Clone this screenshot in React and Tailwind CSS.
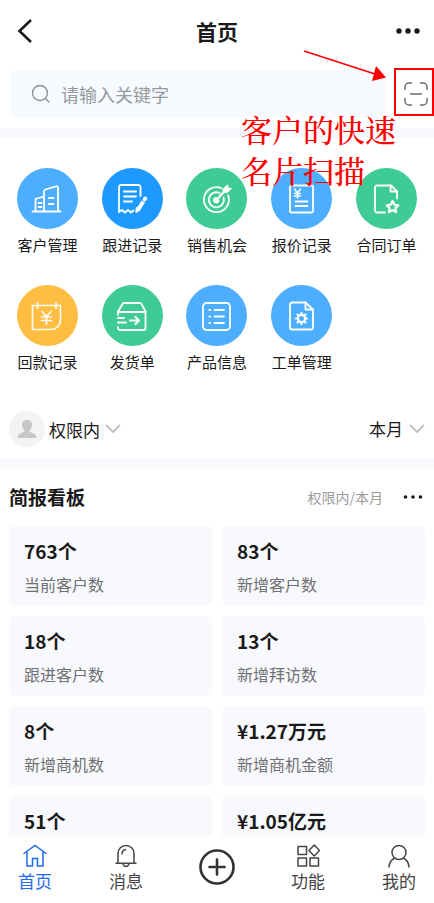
const apps = [
  { name: "客户管理", color: "bg-[#4dadfe]", icon: "building" },
  { name: "跟进记录", color: "bg-[#1e9aff]", icon: "note" },
  { name: "销售机会", color: "bg-[#3fcb95]", icon: "target" },
  { name: "报价记录", color: "bg-[#4dadfe]", icon: "quote" },
  { name: "合同订单", color: "bg-[#3fcb95]", icon: "contract" },
  { name: "回款记录", color: "bg-[#ffbd41]", icon: "payment" },
  { name: "发货单", color: "bg-[#3fcb95]", icon: "delivery" },
  { name: "产品信息", color: "bg-[#4dadfe]", icon: "product" },
  { name: "工单管理", color: "bg-[#4dadfe]", icon: "workorder" },
];

const stats = [
  { value: "763个", label: "当前客户数" },
  { value: "83个", label: "新增客户数" },
  { value: "18个", label: "跟进客户数" },
  { value: "13个", label: "新增拜访数" },
  { value: "8个", label: "新增商机数" },
  { value: "¥1.27万元", label: "新增商机金额" },
  { value: "51个" },
  { value: "¥1.05亿元" },
];

const appGlyphs = {
  building: (
    <>
      <path d="M1.500 28.500h28" />
      <path d="M4.500 28V17a1.500 1.500 0 0 1 1.200-1.500l7.300-1.800M13 28V8.500a2 2 0 0 1 1.500-2l10.500-3.200a1.500 1.500 0 0 1 2 1.500V28" />
      <path d="M7.500 20h3M7.500 24h3M18 15h4.500M18 21h4.500" />
    </>
  ),
  note: (
    <>
      <path d="M24.500 13V4a2 2 0 0 0-2-2H5a2 2 0 0 0-2 2v25l3-2 3 2.500 3-2.500 3 2.500 2.500-2" />
      <path d="M8 8.500h12M8 13.500h12M8 18.500h8" />
      <path d="M29.200 15.500l-.5.900" strokeWidth="4" />
      <path d="M27.300 18.500l-4.800 7.500" strokeWidth="4" strokeLinecap="butt" />
      <path d="M20.800 25l-.6 4 3.500-2.200z" fill="currentColor" />
    </>
  ),
  target: (
    <>
      <path d="M20.500 5.200A12.500 12.500 0 1 0 27.200 12.500" />
      <path d="M18.500 10A7.500 7.500 0 1 0 22.500 14.500" />
      <path d="M15 15.200a2 2 0 1 0 2.300 2.300" strokeWidth="2.400" />
      <path d="M15.500 17L25 6.500" strokeWidth="2.200" />
      <path d="M22 9V6L26.500 2l.8 3 3.200.6-4.500 4z" fill="currentColor" strokeWidth="1" />
    </>
  ),
  quote: (
    <>
      <rect x="4" y="2.500" width="23" height="27" rx="1.500" />
      <path d="M8.500 6l3 4 3-4M11.500 10v5M8.500 10.500h6M8.500 13h6" strokeWidth="1.500" />
      <path d="M9.500 18.500h12M9.500 23h12" />
    </>
  ),
  contract: (
    <>
      <path d="M14 29.500H6a2 2 0 0 1-2-2V4.500a2 2 0 0 1 2-2h14l6 6v7" />
      <path d="M19.500 2.500v6h6.500" />
      <path d="M21.500 18l1.800 3.700 4 .6-2.900 2.800.7 4-3.600-1.900-3.600 1.900.7-4-2.900-2.800 4-.6z" strokeWidth="2.200" />
    </>
  ),
  payment: (
    <>
      <path d="M6.500 5.500H1.500v24H20a9.500 9.500 0 0 0 9.500-9.500V5.500h-4.500" strokeWidth="1.600" />
      <path d="M6.500 2.500v6M25 2.500v6M7 5.500h17" strokeWidth="1.600" />
      <path d="M11 11.500l4.500 5 4.500-5M15.500 16.500v8M10.500 17h10M10.500 20.500h10" strokeWidth="1.600" />
    </>
  ),
  delivery: (
    <>
      <path d="M2 15v-3.500L6.500 4a2 2 0 0 1 1.700-1h15.600a2 2 0 0 1 1.700 1l4 7.500V28a2 2 0 0 1-2 2H4a2 2 0 0 1-2-2v-1" />
      <path d="M2 12h27.500" />
      <path d="M2 18h6M2 22.500h8" />
      <path d="M14 20.500h8.500M19.500 17l3.500 3.500-3.500 3.500" strokeWidth="2.200" />
    </>
  ),
  product: (
    <>
      <rect x="2" y="3" width="27" height="27" rx="3.500" />
      <path d="M8.500 10h.5M8.500 16.500h.5M8.500 23h.5" strokeWidth="2.200" />
      <path d="M13.500 10h9.500M13.500 16.500h9.500M13.500 23h9.500" />
    </>
  ),
  workorder: (
    <>
      <path d="M19.500 2.500H6a2 2 0 0 0-2 2v23a2 2 0 0 0 2 2h19a2 2 0 0 0 2-2V9.500z" />
      <path d="M19.500 2.500v7H27" />
      <circle cx="15.500" cy="18.500" r="3.600" strokeWidth="2.200" />
      <path d="M15.500 13v1M15.500 23v1M10 18.500h1M20 18.500h1M11.600 14.600l.8.800M18.600 21.600l.8.800M11.600 22.400l.8-.8M18.600 15.400l.8-.8" strokeWidth="2.200" />
    </>
  ),
};

function Icon({ children, className, box = "0 0 32 32", width = 2 }) {
  return (
    <svg
      aria-hidden="true"
      viewBox={box}
      className={className}
      fill="none"
      stroke="currentColor"
      strokeWidth={width}
      strokeLinecap="round"
      strokeLinejoin="round"
    >
      {children}
    </svg>
  );
}

function Dots({ className, radius = 2.7 }) {
  return (
    <svg aria-hidden="true" viewBox="0 0 24 6" className={className} fill="currentColor">
      <circle cx="3" cy="3" r={radius} />
      <circle cx="12" cy="3" r={radius} />
      <circle cx="21" cy="3" r={radius} />
    </svg>
  );
}

function Chevron() {
  return (
    <Icon box="0 0 16 10" className="h-[10px] w-4 text-[#c4c4c4]">
      <path d="M1.500 1.500L8 8l6.500-6.500" />
    </Icon>
  );
}

function Header() {
  return (
    <header className="flex h-[62px] shrink-0 items-center justify-between px-[14px]">
      <button aria-label="返回" className="flex w-12 pl-[2px]">
        <svg aria-hidden="true" viewBox="0 0 18 26" className="h-[26px] w-[18px]" fill="none" stroke="#1a1a1a" strokeWidth="2.600">
          <path d="M15 2L3.500 13 15 24" />
        </svg>
      </button>
      <h1 className="text-[21px] leading-7 font-bold">首页</h1>
      <button aria-label="更多" className="flex w-12 justify-end">
        <Dots className="h-6 w-6" />
      </button>
    </header>
  );
}

function SearchRow() {
  return (
    <div className="flex shrink-0 pt-2 pb-[10px] pl-[9px]">
      <label className="flex h-12 min-w-0 flex-1 items-center gap-[10px] rounded-lg bg-[#f7fbff] pl-[22px]">
        <Icon box="0 0 20 20" width={1.4} className="h-5 w-5 shrink-0 text-[#8c8f94]">
          <circle cx="9" cy="9" r="7.500" />
          <path d="M14.500 14.500l3.500 3.500" />
        </Icon>
        <input
          type="search"
          aria-label="搜索"
          placeholder="请输入关键字"
          className="min-w-0 flex-1 bg-transparent text-lg leading-6 outline-none placeholder:text-[#96999e]"
        />
      </label>
      <div className="relative ml-[9px]">
        <button aria-label="扫描名片" className="-mt-[2px] flex h-12 w-10 items-center justify-center border-2 border-[#f00] pt-1 pl-1">
          <Icon box="0 0 24 24" width={1.5} className="h-6 w-6 shrink-0 text-[#6b6b6b]">
            <path d="M1 7.500V5a4 4 0 0 1 4-4h2.500M16.500 1H19a4 4 0 0 1 4 4v2.500M23 16.500V19a4 4 0 0 1-4 4h-2.500M7.500 23H5a4 4 0 0 1-4-4v-2.500M6.500 12h11" />
          </Icon>
        </button>
        <svg aria-hidden="true" viewBox="0 0 84 34" className="pointer-events-none absolute -top-5 right-[47px] h-[34px] w-[84px]">
          <path d="M1 1L72 24" stroke="#f00" strokeWidth="1.700" />
          <path d="M83 27.500L69 31l4-15z" fill="#f00" />
        </svg>
        <p className="pointer-events-none absolute top-[38px] right-[35px] z-10 w-[158px] font-['Noto_Serif_CJK_SC','Noto_Sans_CJK_SC',serif] text-[31px] leading-[41px] font-medium whitespace-nowrap text-[#f00]">
          客户的快速
          <br />
          名片扫描
        </p>
      </div>
    </div>
  );
}

function AppGrid() {
  return (
    <nav aria-label="应用" className="grid shrink-0 grid-cols-5 gap-y-[30px] px-[5px] pt-[30px]">
      {apps.map((app) => (
        <a key={app.name} href="#" className="flex flex-col items-center gap-[6px]">
          <span className={`flex size-[61px] items-center justify-center rounded-full text-white ${app.color}`}>
            <Icon className="size-8" width={1.8}>{appGlyphs[app.icon]}</Icon>
          </span>
          <span className="text-[15px] leading-5">{app.name}</span>
        </a>
      ))}
    </nav>
  );
}

function Filters() {
  return (
    <div className="flex shrink-0 items-center justify-between px-[9px] pt-[39px] pb-[11px]">
      <label className="flex items-center gap-1">
        <span className="flex size-9 items-center justify-center rounded-full bg-[#f3f3f3]">
          <svg aria-hidden="true" viewBox="0 0 20 20" className="size-5" fill="#c6c6c6">
            <path d="M10 1c3 0 5 2 5 5 0 2.200-1 4.200-2.500 5.300v1.500L17.500 15c1.300.6 1.800 1.800 1.800 4H.7c0-2.200.5-3.400 1.800-4l5-2.200v-1.500C6 10.200 5 8.200 5 6c0-3 2-5 5-5z" />
          </svg>
        </span>
        <select aria-label="权限范围" className="w-[52px] appearance-none bg-transparent pt-[2px] text-[17px] leading-6">
          <option>权限内</option>
        </select>
        <Chevron />
      </label>
      <label className="flex items-center gap-1">
        <select aria-label="时间范围" className="w-9 appearance-none bg-transparent text-[17px] leading-6">
          <option>本月</option>
        </select>
        <Chevron />
      </label>
    </div>
  );
}

function Board() {
  return (
    <section className="px-[9px]">
      <div className="flex h-[58px] items-center">
        <h2 className="text-[19px] leading-6 font-bold">简报看板</h2>
        <span className="ml-auto text-sm text-[#9b9b9b]">权限内/本月</span>
        <button aria-label="看板设置" className="mr-[2px] ml-5 flex">
          <Dots className="h-5 w-5" radius={2.2} />
        </button>
      </div>
      <div className="grid grid-cols-2 gap-[10px]">
        {stats.map((s) => (
          <article key={s.value} className="h-20 rounded-md bg-[#f8f9fd] px-[15px] pt-3">
            <p className="text-[19px] leading-[26px] font-bold">{s.value}</p>
            {s.label && <p className="mt-2 text-base leading-6 text-[#707174]">{s.label}</p>}
          </article>
        ))}
      </div>
    </section>
  );
}

function Tab({ label, active, children }) {
  return (
    <a
      href="#"
      aria-current={active ? "page" : undefined}
      className={`flex w-[70px] flex-col items-center ${active ? "text-[#1f6be8]" : "text-[#444]"}`}
    >
      <Icon box="0 0 24 24" width={1.5} className="size-6">{children}</Icon>
      <span className="text-[17px] leading-[26px]">{label}</span>
    </a>
  );
}

function TabBar() {
  return (
    <nav aria-label="主导航" className="flex h-[67px] shrink-0 justify-between bg-white pt-2">
      <Tab label="首页" active>
        <path d="M1 9.500L12 1.500l11 8M4 8.500V22h5.500v-7.500h5V22H20V8.500" strokeLinejoin="miter" />
      </Tab>
      <Tab label="消息">
        <path d="M4 19V9.500a8 8 0 0 1 16 0V19M2 19.200h20M9 19.500c.3 2 1.500 3 3 3s2.700-1 3-3M8 10c0-2.500 1.200-4 3.500-4.500" />
      </Tab>
      <button aria-label="新建" className="flex w-[70px] justify-center pt-[5px] text-[#333]">
        <Icon box="0 0 36 36" width={2.6} className="size-9 shrink-0">
          <circle cx="18" cy="18" r="16.500" />
          <path d="M18 10.500v15M10.500 18h15" />
        </Icon>
      </button>
      <Tab label="功能">
        <path d="M2 2.500h8.500v8H2zM2 14h8.500v8H2zM14 14h8.500v8H14zM18.200 1l5.300 5.500-5.300 5.500-5.300-5.500z" />
      </Tab>
      <Tab label="我的">
        <circle cx="12" cy="8.500" r="7" />
        <path d="M2 23c.3-4 2-7 5-8.500M22 23c-.3-4-2-7-5-8.500" />
      </Tab>
    </nav>
  );
}

export default function App() {
  return (
    <div className="flex h-screen flex-col bg-white font-['Noto_Sans_CJK_SC',sans-serif] text-[#1a1a1a]">
      <Header />
      <SearchRow />
      <main className="flex min-h-0 flex-1 flex-col overflow-hidden">
        <div className="h-[10px] shrink-0 bg-[#f8f9fd]" />
        <AppGrid />
        <Filters />
        <div className="h-[10px] shrink-0 bg-[#f8f9fd]" />
        <Board />
      </main>
      <TabBar />
    </div>
  );
}
